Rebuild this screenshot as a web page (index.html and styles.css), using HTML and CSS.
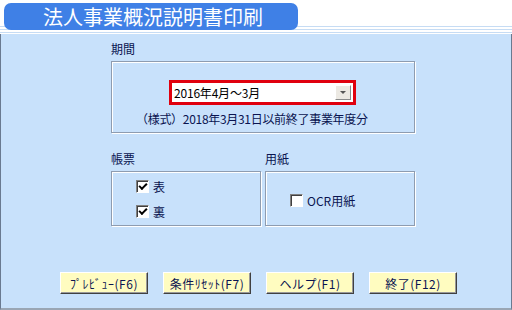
FILE: index.html
```html
<!DOCTYPE html>
<html>
<head>
    <link rel="stylesheet" href="styles.css">
    <title>法人事業概況説明書印刷</title>
</head>
<body>

    <div class="header">
      <h1 class="title">法人事業概況説明書印刷</h1>
    </div>

    <div class="panel">
      <div class="content">
        <div class="label">期間</div>
        <div class="group period">
          <div class="combo-frame">
            <div class="combo">
              <span class="combo-text">2016年4月～3月</span>
              <span class="combo-btn"><span class="arrow"></span></span>
            </div>
          </div>
          <div class="note">（様式）2018年3月31日以前終了事業年度分</div>
        </div>

        <div class="row">
          <div class="col">
            <div class="label">帳票</div>
            <div class="group form">
              <label class="check"><span class="box checked"></span>表</label>
              <label class="check"><span class="box checked"></span>裏</label>
            </div>
          </div>
          <div class="col">
            <div class="label">用紙</div>
            <div class="group paper">
              <label class="check"><span class="box"></span>OCR用紙</label>
            </div>
          </div>
        </div>
      </div>

      <div class="buttons">
        <button class="btn">ﾌﾟﾚﾋﾞｭｰ(F6)</button>
        <button class="btn">条件ﾘｾｯﾄ(F7)</button>
        <button class="btn">ヘルプ(F1)</button>
        <button class="btn">終了(F12)</button>
      </div>
    </div>

</body>
</html>
```

FILE: styles.css
```css
/* general styling */
* {
  box-sizing: border-box;
  margin: 0;
  padding: 0;
}

html, body {
  height: 100%;
}

body {
  background-color: #fff;
  color: #0a1450;
  font-family: "Noto Sans CJK JP", "DejaVu Sans", sans-serif;
  font-size: 12px;
  overflow: hidden;
}

/* title strip */
.header {
  background: linear-gradient(to bottom,
    #fff 0, #fff 26px,
    #c6dcf4 26px, #c6dcf4 27px,
    #fff 27px, #fff 29px,
    #c6dcf4 29px, #c6dcf4 30px,
    #fff 30px, #fff 32px,
    #c6dcf4 32px, #c6dcf4 33px,
    #fff 33px, #fff 34px);
  height: 34px;
  padding: 3px 0 0 4px;
}

.title {
  background-color: #3f80e6;
  border-radius: 7px;
  color: #fff;
  font-size: 20px;
  font-weight: normal;
  height: 27px;
  letter-spacing: 0;
  line-height: 27px;
  padding-left: 39px;
  width: 294px;
}

/* main panel */
.panel {
  background-color: #c8e1fb;
  border-bottom: 2px solid #9aa6b4;
  border-left: 1px solid #6a7a90;
  border-right: 1px solid #6a7a90;
  height: 276px;
}

.content {
  margin-left: 110px;
  padding-top: 8px;
  width: 304px;
}

.label {
  height: 19px;
  line-height: 14px;
}

.group {
  border: 1px solid #8e9cb0;
  box-shadow: inset 1px 1px #fff, 1px 1px #fff;
}

.period {
  height: 72px;
  padding-top: 18px;
}

.combo-frame {
  border: 3px solid #e0000e;
  height: 25px;
  margin-left: 57px;
  width: 187px;
}

.combo {
  align-items: center;
  background-color: #fff;
  display: flex;
  height: 19px;
  justify-content: space-between;
  padding: 0 2px 0 2px;
}

.combo-text {
  color: #000;
  letter-spacing: -0.2px;
  line-height: 16px;
}

.combo-btn {
  align-items: center;
  background-color: #ece9e3;
  border: 1px solid;
  border-color: #fff #8a8a8a #8a8a8a #fff;
  display: flex;
  height: 15px;
  justify-content: center;
  width: 16px;
}

.arrow {
  border-left: 3px solid transparent;
  border-right: 3px solid transparent;
  border-top: 3px solid #555;
}

.note {
  letter-spacing: -0.3px;
  margin-top: 5px;
  padding-left: 24px;
}

.row {
  display: flex;
  gap: 4px;
  margin-top: 19px;
}

.col {
  flex: 1;
}

.form {
  display: flex;
  flex-direction: column;
  gap: 8px;
  height: 55px;
  padding: 6px 0 0 24px;
}

.paper {
  height: 55px;
  padding: 20px 0 0 24px;
}

.check {
  align-items: center;
  display: flex;
  gap: 4px;
  height: 17px;
}

.box {
  background-color: #fff;
  border: 1px solid;
  border-color: #808080 #fff #fff #808080;
  box-shadow: inset 1px 1px #404040;
  display: inline-block;
  height: 13px;
  position: relative;
  width: 13px;
}

.box.checked::after {
  border-bottom: 2px solid #000;
  border-left: 2px solid #000;
  content: "";
  height: 3px;
  left: 2px;
  position: absolute;
  top: 2px;
  transform: rotate(-45deg);
  width: 6px;
}

/* buttons */
.buttons {
  display: flex;
  gap: 15px;
  margin-top: 46px;
  padding-left: 59px;
}

.btn {
  background-color: #fffcc0;
  border: 1px solid;
  border-color: #fff #404040 #404040 #fff;
  box-shadow: inset -1px -1px #9a9a9a;
  color: #0a1450;
  font-family: "Noto Sans CJK JP", "DejaVu Sans", sans-serif;
  font-size: 12px;
  height: 22px;
  letter-spacing: 0.5px;
  width: 88px;
}
```
